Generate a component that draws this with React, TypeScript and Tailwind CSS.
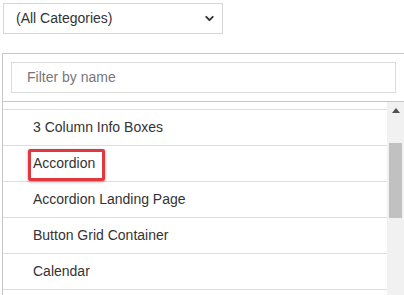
import { ChevronDown } from "lucide-react";

const items = [
  "3 Column Info Boxes",
  "Accordion",
  "Accordion Landing Page",
  "Button Grid Container",
  "Calendar",
];

export default function App() {
  return (
    <div className="h-[295px] w-[404px] overflow-hidden bg-white font-['Liberation_Sans',Arial,sans-serif] text-[14px] text-[#333]">
      <div className="pl-[3px] pt-[3px]">
        <div className="flex h-[31px] w-[220px] items-center justify-between border border-[#d6d6d6] bg-white pl-[12px] pr-[6px]">
          <span>(All Categories)</span>
          <ChevronDown className="h-[13px] w-[13px] text-[#333]" strokeWidth={3.5} />
        </div>
      </div>

      <div className="ml-[2px] mt-[19px] flex h-[300px] flex-col border-l border-t border-[#c6c6c6]">
        <div className="px-[8px] pb-[8px] pt-[8px]">
          <div className="flex h-[31px] items-center border border-[#dcdcdc] px-[15px] text-[#777]">
            Filter by name
          </div>
        </div>

        <div className="flex flex-1 border-t border-[#c6c6c6]">
          <div className="flex-1">
            <div className="h-[8px] border-b border-[#dedede]" />
            {items.map((item) => (
              <div
                key={item}
                className="relative flex h-[36px] items-center border-b border-[#dedede] pl-[30px]"
              >
                {item}
                {item === "Accordion" ? (
                  <div className="absolute left-[25px] top-[3px] h-[32px] w-[77px] rounded-[2px] border-[3px] border-[#e0383d] shadow-[0_1px_3px_rgba(0,0,0,0.35)]" />
                ) : null}
              </div>
            ))}
          </div>

          <div className="flex w-[17px] flex-col items-center bg-[#f1f1f1]">
            <div className="flex h-[17px] w-full items-center justify-center">
              <svg width="8" height="5" viewBox="0 0 8 5">
                <path d="M0 5 L4 0 L8 5 Z" fill="#505050" />
              </svg>
            </div>
            <div className="mt-[24px] h-[75px] w-[13px] bg-[#c1c1c1]" />
          </div>
        </div>
      </div>
    </div>
  );
}
